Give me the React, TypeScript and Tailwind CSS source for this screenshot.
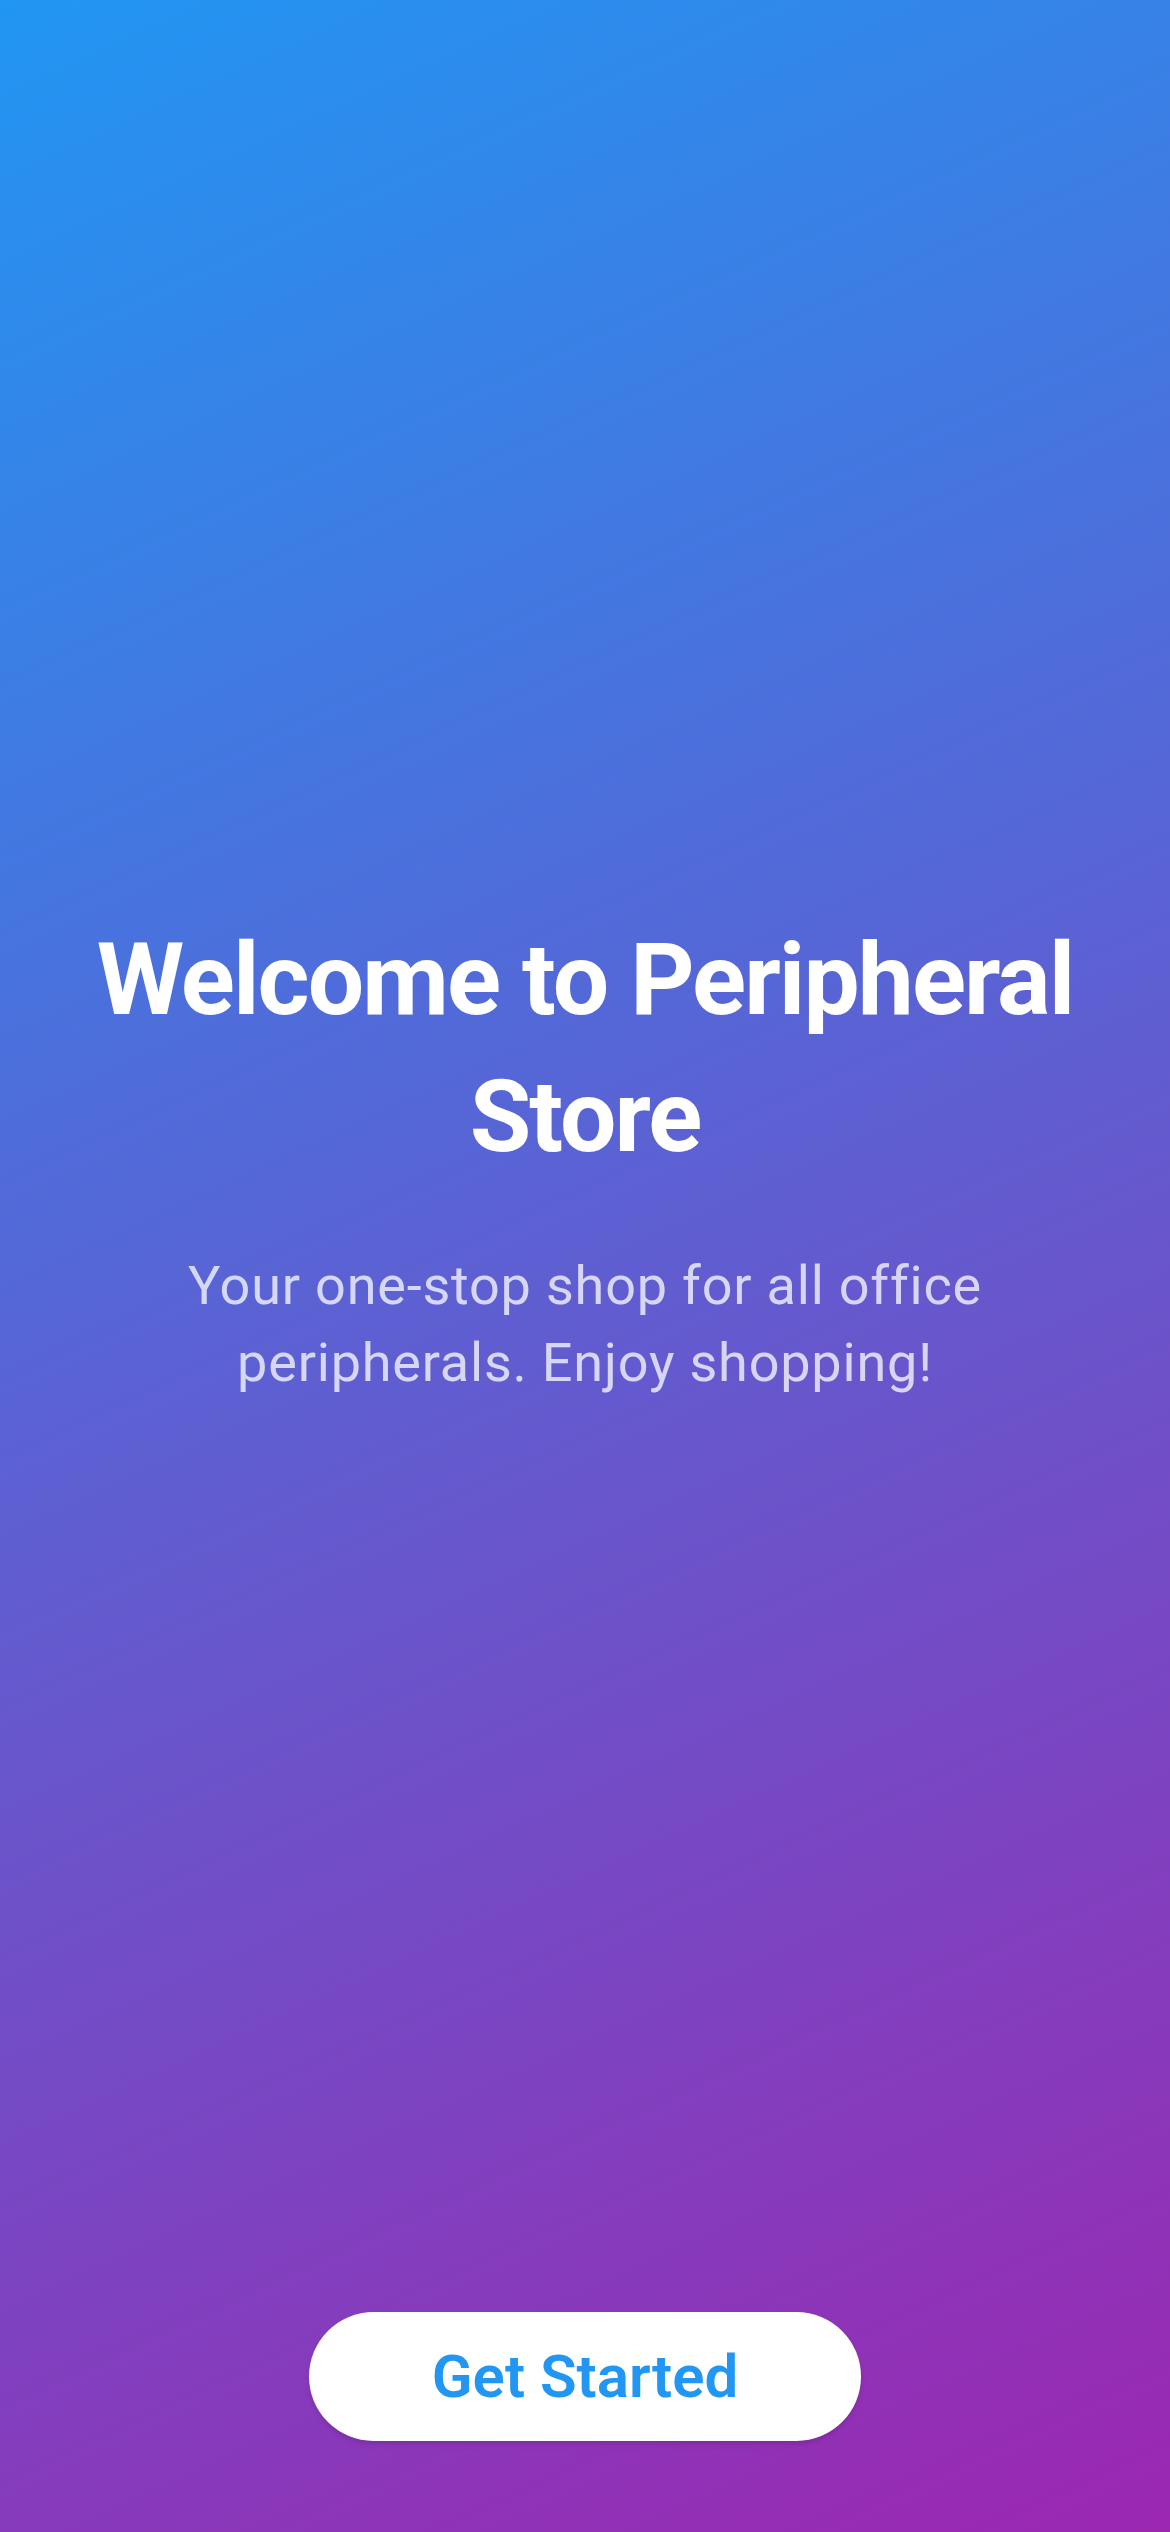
export default function App() {
  return (
    <div
      className="flex h-[2532px] w-full flex-col bg-[linear-gradient(155.2deg,#2196F3,#9C27B0)] text-center"
      style={{ fontFamily: 'Roboto, "Noto Sans", sans-serif' }}
    >
      <div className="flex flex-1 flex-col items-center justify-center px-[72px]">
        <h1 className="text-[100px] font-bold leading-[137px] tracking-[-1.9px] text-white">
          Welcome to Peripheral Store
        </h1>
        <p className="mt-[62px] text-[54px] leading-[77px] tracking-[0.8px] text-white/75">
          Your one-stop shop for all office peripherals. Enjoy shopping!
        </p>
      </div>
      <div className="flex justify-center pb-[91px]">
        <button className="flex h-[129px] items-center justify-center rounded-full bg-white px-[123px] text-[60px] font-semibold text-[#2196F3] shadow-md">
          Get Started
        </button>
      </div>
    </div>
  )
}
